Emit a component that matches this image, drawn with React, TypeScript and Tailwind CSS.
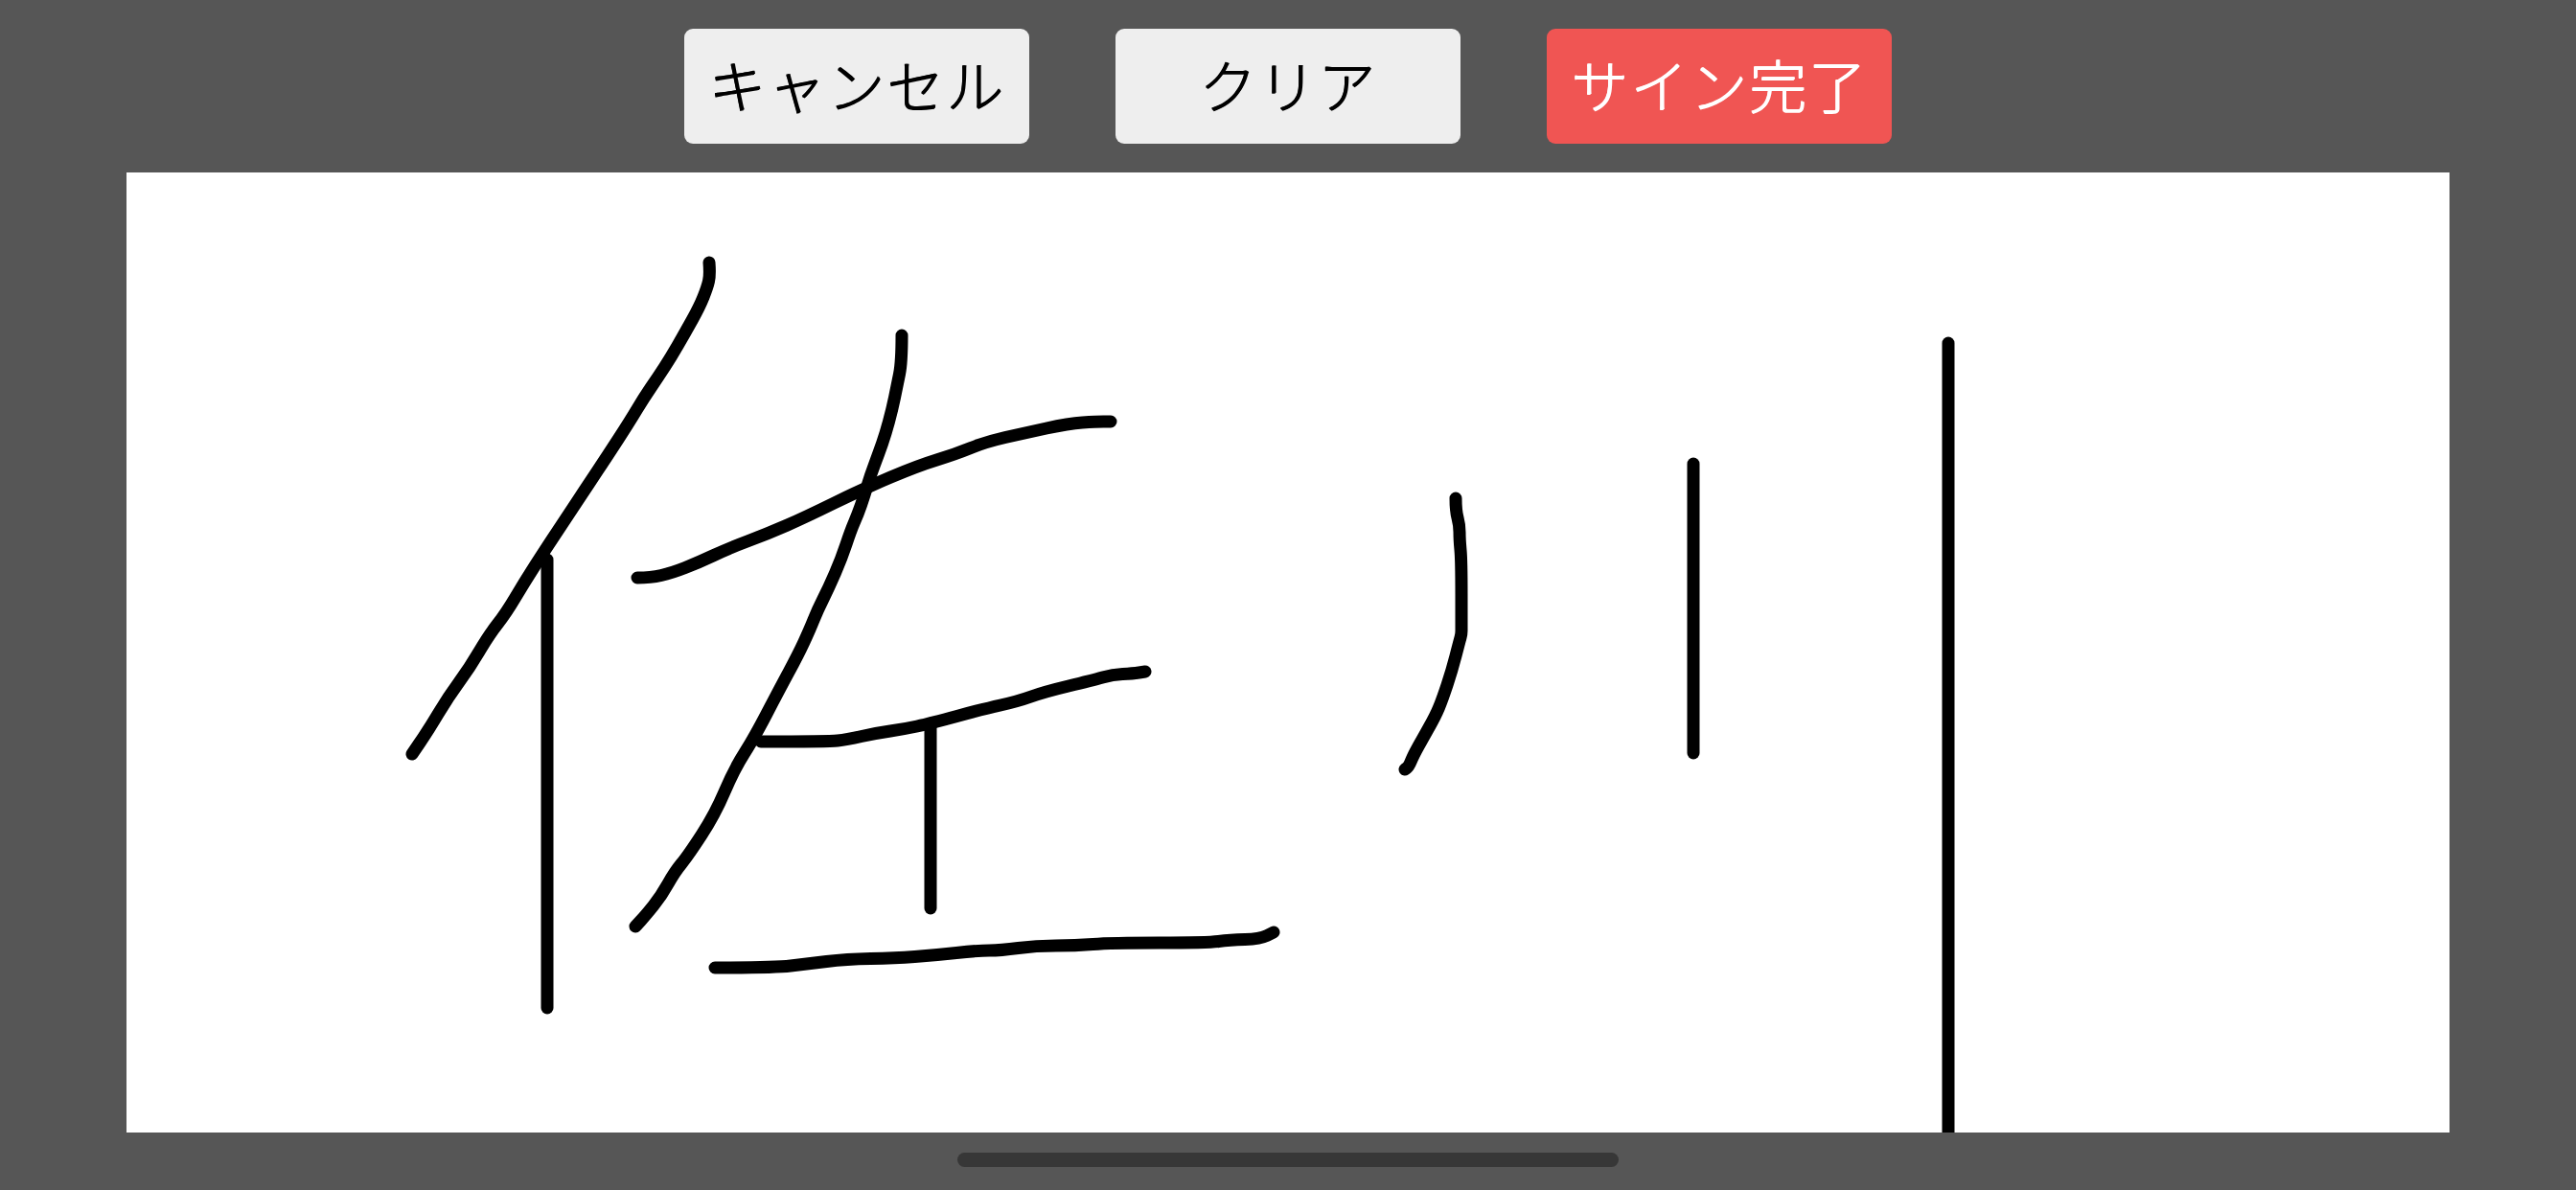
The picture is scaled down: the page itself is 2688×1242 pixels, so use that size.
// signature strokes, in page pixels
const strokes: number[][][] = [
  [[740,274],[741,287],[738,300],[730,320],[715,347],[700,373],[687,393],[672,415],[657,440],[633,477],[613,507],[590,542],[570,572],[547,608],[528,640],[510,663],[490,697],[468,727],[447,762],[430,787]],
  [[571,584],[571,1052]],
  [[665,603],[679,603],[701,598],[729,587],[761,572],[801,557],[840,540],[901,510],[958,486],[997,474],[1029,461],[1069,452],[1115,442],[1144,440],[1159,440]],
  [[941,350],[941,378],[936,403],[931,427],[924,453],[917,473],[908,497],[902,517],[895,537],[888,553],[878,583],[865,613],[853,637],[845,657],[833,683],[813,720],[787,770],[766,803],[746,850],[718,893],[704,910],[690,935],[674,955],[663,967]],
  [[794,774],[865,774],[883,772],[915,765],[943,761],[971,755],[1026,740],[1062,732],[1090,722],[1140,710],[1161,704],[1182,703],[1195,701]],
  [[971,755],[971,948]],
  [[746,1010],[808,1010],[842,1006],[883,1001],[934,1000],[975,997],[1021,992],[1044,992],[1081,987],[1122,987],[1159,984],[1260,984],[1283,981],[1315,980],[1329,973]],
  [[1519,520],[1519,533],[1523,548],[1523,563],[1525,585],[1525,655],[1525,662],[1523,669],[1515,700],[1505,730],[1498,747],[1485,770],[1475,788],[1470,800],[1466,803]],
  [[1767,484],[1767,786]],
  [[2033,358],[2033,1190]],
]

// rounds the corners through segment midpoints, like a canvas pen does
function toPath(pts: number[][]) {
  let d = `M${pts[0][0]} ${pts[0][1]}`
  for (let i = 1; i < pts.length - 1; i++) {
    const mx = (pts[i][0] + pts[i + 1][0]) / 2
    const my = (pts[i][1] + pts[i + 1][1]) / 2
    d += ` Q${pts[i][0]} ${pts[i][1]} ${mx} ${my}`
  }
  const last = pts[pts.length - 1]
  return d + ` L${last[0]} ${last[1]}`
}

export default function App() {
  return (
    <div className="flex h-[1242px] w-[2688px] flex-col overflow-hidden bg-[#565656] font-['Noto_Sans_CJK_JP',sans-serif]">
      <div className="flex h-[180px] items-center justify-center gap-[90px]">
        <button className="h-[120px] w-[360px] rounded-[9px] bg-[#eeeeee] pb-[6px] text-[60px] font-light leading-none tracking-[2px] text-black [text-shadow:1px_0_0_#000,0_1px_0_#000]">キャンセル</button>
        <button className="h-[120px] w-[360px] rounded-[9px] bg-[#eeeeee] pb-[6px] text-[60px] font-light leading-none tracking-[2px] text-black [text-shadow:1px_0_0_#000,0_1px_0_#000]">クリア</button>
        <button className="h-[120px] w-[360px] rounded-[9px] bg-[#f05553] pb-[6px] text-[60px] font-light leading-none tracking-[2px] text-white [text-shadow:1px_0_0_#fff,0_1px_0_#fff]">サイン完了</button>
      </div>

      {/* signature canvas */}
      <div className="mx-[132px] h-[1002px] bg-white">
        <svg viewBox="132 180 2424 1002" className="block h-full w-full" fill="none" stroke="#000" strokeWidth={13} strokeLinecap="round" strokeLinejoin="round">
          {strokes.map((pts, i) => (
            <path key={i} d={toPath(pts)} />
          ))}
        </svg>
      </div>

      <div className="flex flex-1 justify-center pt-[21px]">
        <div className="h-[15px] w-[690px] rounded-[8px] bg-[#373737]" />
      </div>
    </div>
  )
}
